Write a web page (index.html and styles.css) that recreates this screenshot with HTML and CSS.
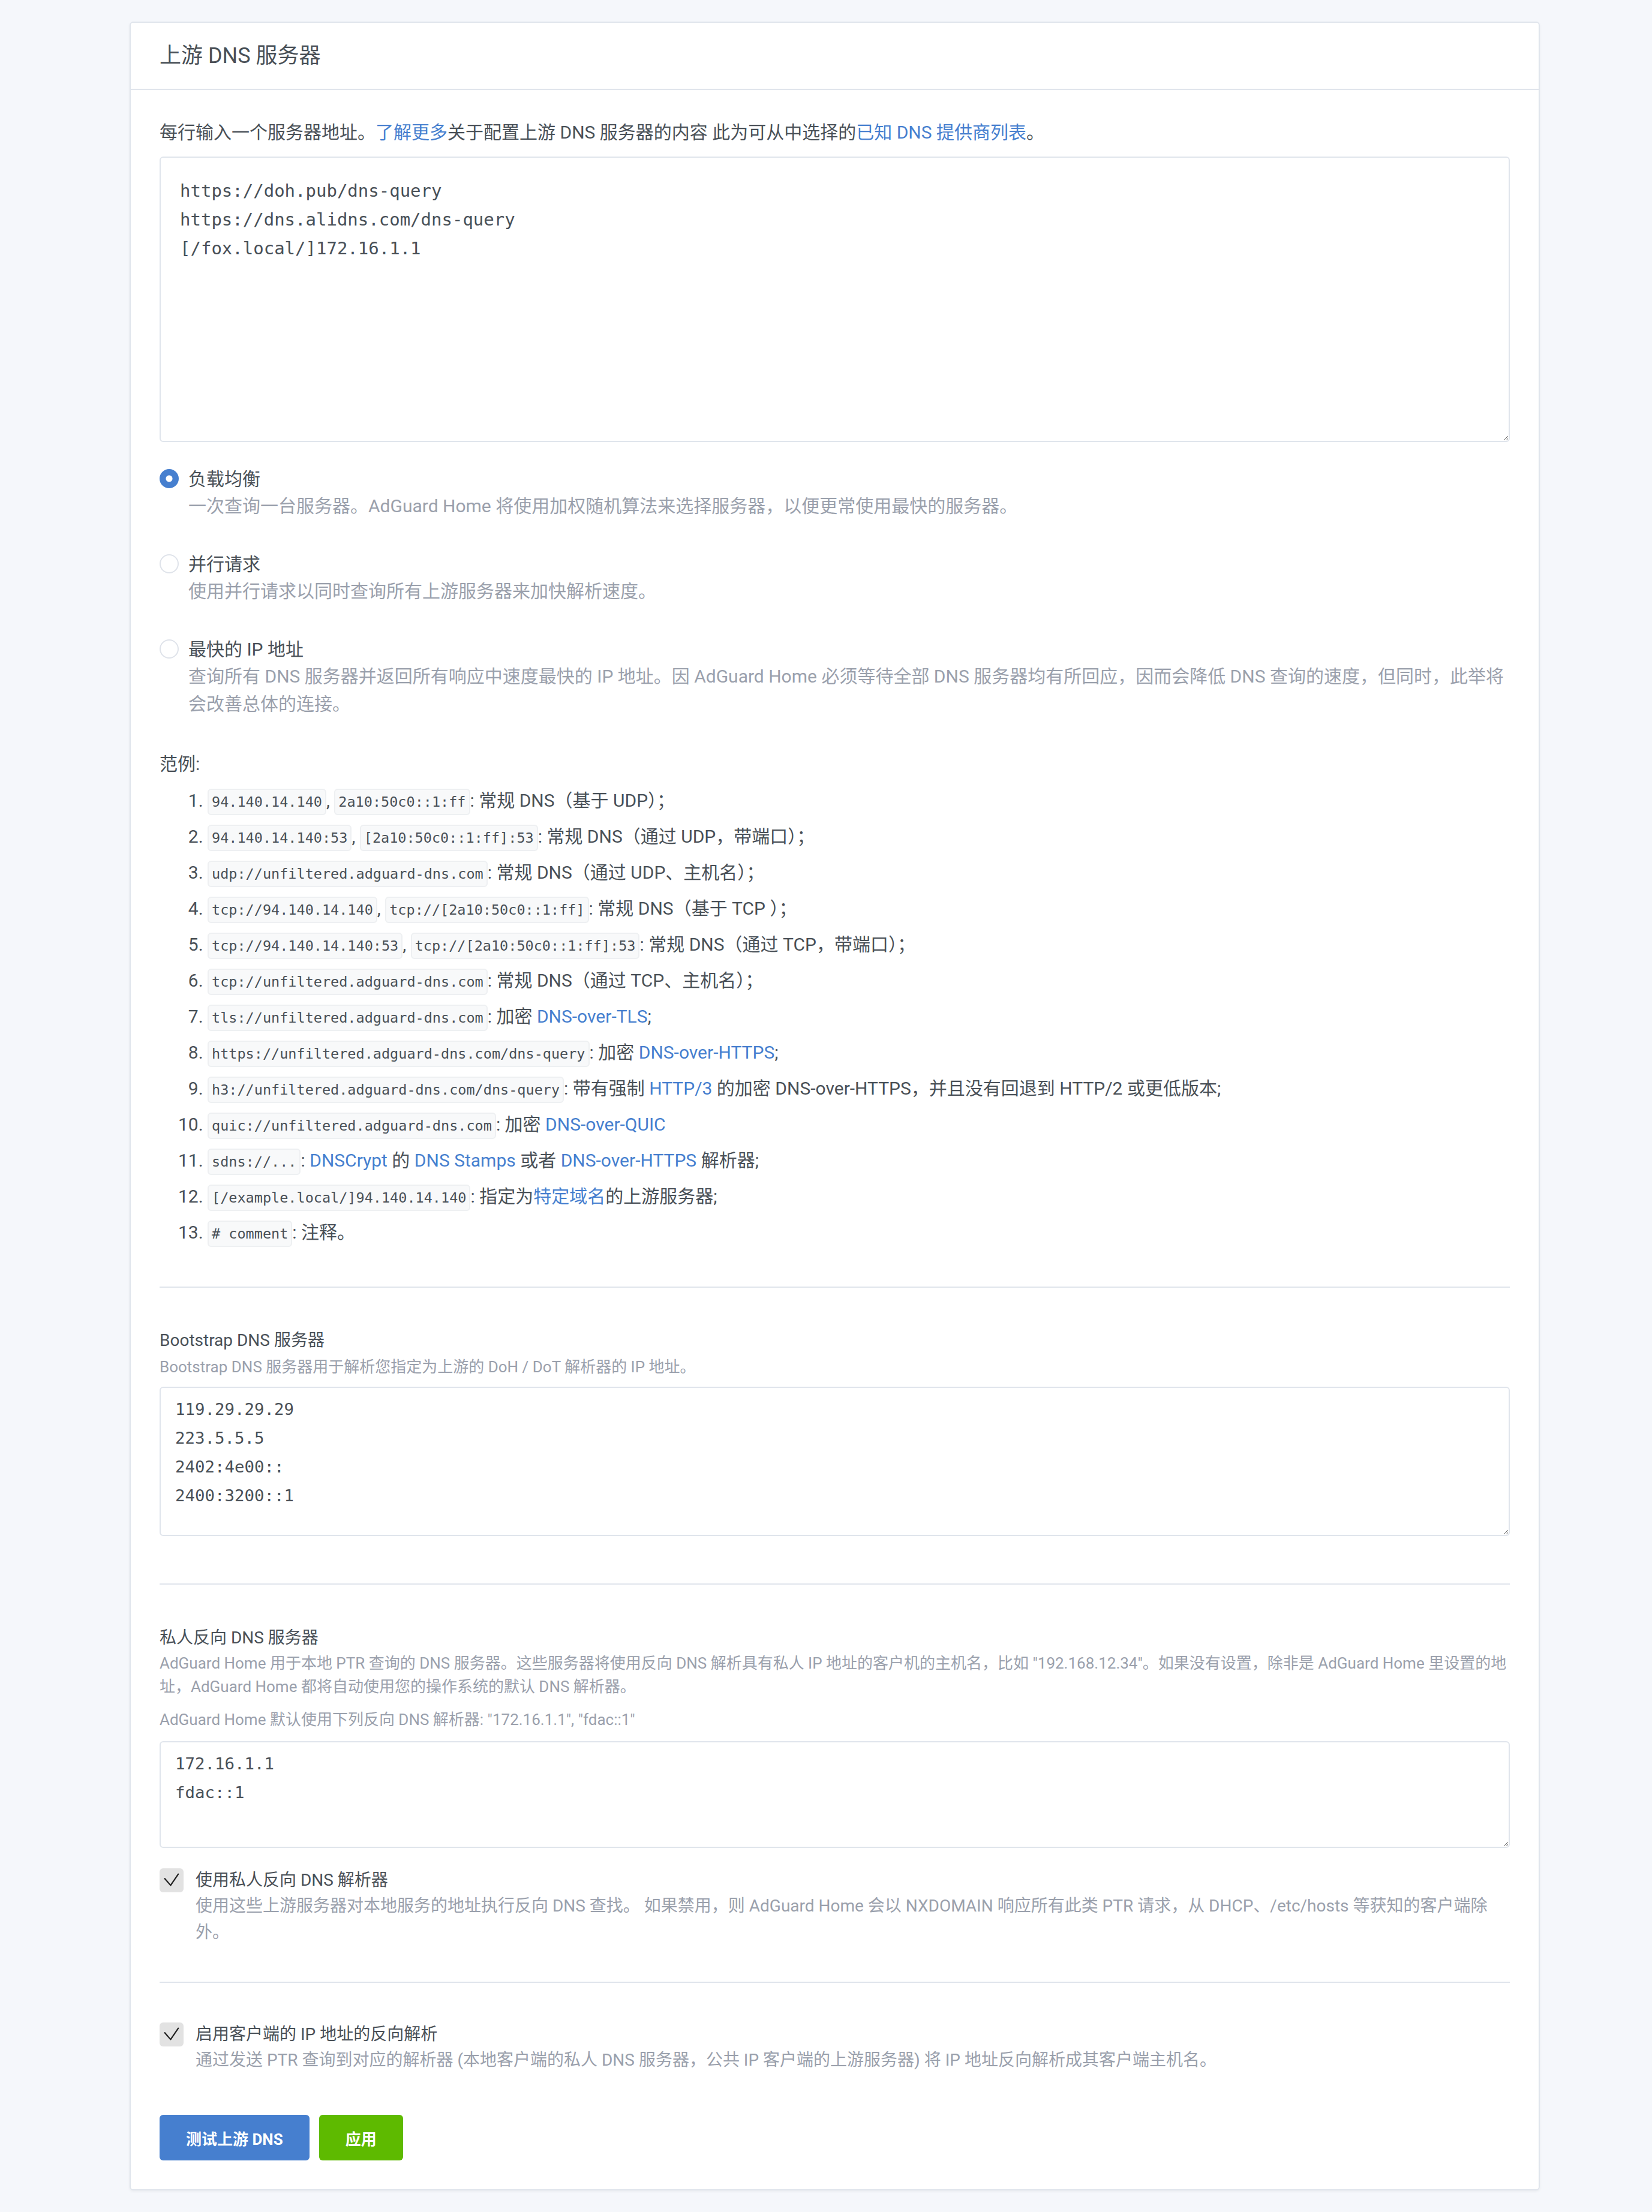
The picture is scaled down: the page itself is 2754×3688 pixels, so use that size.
FILE: index.html
```html
<!DOCTYPE html>
<html lang="zh-CN">
<head>
<meta charset="utf-8">
<title>上游 DNS 服务器</title>
<link rel="stylesheet" href="styles.css">
</head>
<body>
<div class="page">
  <div class="card">
    <div class="card-header">
      <h3 class="card-title">上游 DNS 服务器</h3>
    </div>
    <div class="card-body">
      <p class="intro">每行输入一个服务器地址。<a href="#">了解更多</a>关于配置上游 DNS 服务器的内容 此为可从中选择的<a href="#">已知 DNS 提供商列表</a>。</p>
      <textarea class="ta ta-upstream" spellcheck="false">https://doh.pub/dns-query
https://dns.alidns.com/dns-query
[/fox.local/]172.16.1.1</textarea>

      <div class="radios">
        <label class="radio">
          <input type="radio" name="mode" checked>
          <span class="radio-title">负载均衡</span>
          <span class="radio-desc">一次查询一台服务器。AdGuard Home 将使用加权随机算法来选择服务器，以便更常使用最快的服务器。</span>
        </label>
        <label class="radio">
          <input type="radio" name="mode">
          <span class="radio-title">并行请求</span>
          <span class="radio-desc">使用并行请求以同时查询所有上游服务器来加快解析速度。</span>
        </label>
        <label class="radio">
          <input type="radio" name="mode">
          <span class="radio-title">最快的 IP 地址</span>
          <span class="radio-desc">查询所有 DNS 服务器并返回所有响应中速度最快的 IP 地址。因 AdGuard Home 必须等待全部 DNS 服务器均有所回应，因而会降低 DNS 查询的速度，但同时，此举将会改善总体的连接。</span>
        </label>
      </div>

      <div class="examples">
        <div class="examples-title">范例:</div>
        <ol class="examples-list">
          <li><code>94.140.14.140</code>, <code>2a10:50c0::1:ff</code>: 常规 DNS（基于 UDP）；</li>
          <li><code>94.140.14.140:53</code>, <code>[2a10:50c0::1:ff]:53</code>: 常规 DNS（通过 UDP，带端口）；</li>
          <li><code>udp://unfiltered.adguard-dns.com</code>: 常规 DNS（通过 UDP、主机名）；</li>
          <li><code>tcp://94.140.14.140</code>, <code>tcp://[2a10:50c0::1:ff]</code>: 常规 DNS（基于 TCP ）；</li>
          <li><code>tcp://94.140.14.140:53</code>, <code>tcp://[2a10:50c0::1:ff]:53</code>: 常规 DNS（通过 TCP，带端口）；</li>
          <li><code>tcp://unfiltered.adguard-dns.com</code>: 常规 DNS（通过 TCP、主机名）；</li>
          <li><code>tls://unfiltered.adguard-dns.com</code>: 加密 <a href="#">DNS-over-TLS</a>;</li>
          <li><code>https://unfiltered.adguard-dns.com/dns-query</code>: 加密 <a href="#">DNS-over-HTTPS</a>;</li>
          <li><code>h3://unfiltered.adguard-dns.com/dns-query</code>: 带有强制 <a href="#">HTTP/3</a> 的加密 DNS-over-HTTPS，并且没有回退到 HTTP/2 或更低版本;</li>
          <li><code>quic://unfiltered.adguard-dns.com</code>: 加密 <a href="#">DNS-over-QUIC</a></li>
          <li><code>sdns://...</code>: <a href="#">DNSCrypt</a> 的 <a href="#">DNS Stamps</a> 或者 <a href="#">DNS-over-HTTPS</a> 解析器;</li>
          <li><code>[/example.local/]94.140.14.140</code>: 指定为<a href="#">特定域名</a>的上游服务器;</li>
          <li><code># comment</code>: 注释。</li>
        </ol>
      </div>

      <hr class="divider divider-1">

      <div class="field">
        <div class="field-label">Bootstrap DNS 服务器</div>
        <div class="field-desc">Bootstrap DNS 服务器用于解析您指定为上游的 DoH / DoT 解析器的 IP 地址。</div>
        <textarea class="ta ta-small ta-bootstrap" spellcheck="false">119.29.29.29
223.5.5.5
2402:4e00::
2400:3200::1</textarea>
      </div>

      <hr class="divider divider-2">

      <div class="field">
        <div class="field-label">私人反向 DNS 服务器</div>
        <div class="field-desc field-desc-tight">AdGuard Home 用于本地 PTR 查询的 DNS 服务器。这些服务器将使用反向 DNS 解析具有私人 IP 地址的客户机的主机名，比如 "192.168.12.34"。如果没有设置，除非是 AdGuard Home 里设置的地址，AdGuard Home 都将自动使用您的操作系统的默认 DNS 解析器。</div>
        <div class="field-desc field-desc-default">AdGuard Home 默认使用下列反向 DNS 解析器: "172.16.1.1", "fdac::1"</div>
        <textarea class="ta ta-small ta-private" spellcheck="false">172.16.1.1
fdac::1</textarea>
      </div>

      <div class="check check-first">
        <span class="check-box"><svg viewBox="0 0 20 20" width="40" height="40"><polyline points="4.4,8.6 9.2,14.2 15.6,4.8" fill="none" stroke="#1f1f1f" stroke-width="1.1" stroke-linecap="round" stroke-linejoin="round"/></svg></span>
        <span class="check-title">使用私人反向 DNS 解析器</span>
        <span class="check-desc">使用这些上游服务器对本地服务的地址执行反向 DNS 查找。 如果禁用，则 AdGuard Home 会以 NXDOMAIN 响应所有此类 PTR 请求，从 DHCP、/etc/hosts 等获知的客户端除外。</span>
      </div>

      <hr class="divider divider-3">

      <div class="check">
        <span class="check-box"><svg viewBox="0 0 20 20" width="40" height="40"><polyline points="4.4,8.6 9.2,14.2 15.6,4.8" fill="none" stroke="#1f1f1f" stroke-width="1.1" stroke-linecap="round" stroke-linejoin="round"/></svg></span>
        <span class="check-title">启用客户端的 IP 地址的反向解析</span>
        <span class="check-desc">通过发送 PTR 查询到对应的解析器 (本地客户端的私人 DNS 服务器，公共 IP 客户端的上游服务器) 将 IP 地址反向解析成其客户端主机名。</span>
      </div>

      <div class="actions">
        <button type="button" class="btn btn-primary">测试上游 DNS</button>
        <button type="button" class="btn btn-success">应用</button>
      </div>
    </div>
  </div>
</div>
</body>
</html>
```

FILE: styles.css
```css
html, body {
  margin: 0;
  padding: 0;
}

body {
  background: #f5f7fb;
  color: #495057;
  font-family: Roboto, "Noto Sans CJK SC", sans-serif;
  font-size: 30px;
  line-height: 45px;
}

a {
  color: #467fcf;
  text-decoration: none;
}

.page {
  padding: 36px 0 36px 216px;
}

.card {
  width: 2351px;
  box-sizing: border-box;
  background: #fff;
  border: 2px solid #e0e5ec;
  border-radius: 6px;
  box-shadow: 0 2px 4px rgba(0, 0, 0, 0.05);
}

.card-header {
  height: 112px;
  box-sizing: border-box;
  padding: 0 48px;
  border-bottom: 2px solid #e0e5ec;
  display: flex;
  align-items: center;
}

.card-title {
  margin: 0;
  font-size: 36px;
  font-weight: 400;
  line-height: 43px;
}

.card-body {
  padding: 48px;
}

.intro {
  margin: 0 0 18px;
}

/* textareas */
.ta {
  display: block;
  width: 100%;
  box-sizing: border-box;
  margin: 0;
  border: 2px solid #e0e5ec;
  border-radius: 6px;
  background: #fff;
  color: #495057;
  font-family: "DejaVu Sans Mono", monospace;
  line-height: 48px;
  resize: vertical;
  overflow: hidden;
  outline: none;
}

.ta-upstream {
  height: 476px;
  padding: 31px 32px;
  font-size: 29px;
}

.ta-small {
  padding: 12px 24px;
  font-size: 27.4px;
}

.ta-bootstrap {
  height: 249px;
  margin-top: 13px;
}

.ta-private {
  height: 178px;
  margin-top: 16px;
}

/* radios */
.radios {
  display: flex;
  flex-direction: column;
  gap: 51px;
  margin: 39px 0 0;
}

.radio {
  display: grid;
  grid-template-columns: 32px 1fr;
  column-gap: 16px;
  cursor: pointer;
}

.radio input {
  -webkit-appearance: none;
  appearance: none;
  grid-column: 1;
  grid-row: 1;
  width: 32px;
  height: 32px;
  margin: 6px 0 0;
  box-sizing: border-box;
  border: 2px solid #dfe3ea;
  border-radius: 50%;
  background: #fff;
}

.radio input:checked {
  border-color: #467fcf;
  background: radial-gradient(circle, #fff 0 5px, #467fcf 6px);
}

.radio-title {
  grid-column: 2;
  grid-row: 1;
  line-height: 45px;
}

.radio-desc {
  grid-column: 2;
  grid-row: 2;
  color: #9aa0ac;
  line-height: 46px;
}

/* examples */
.examples {
  margin-top: 54px;
  font-size: 30px;
}

.examples-title {
  line-height: 45px;
}

.examples-list {
  margin: 9px 0 0;
  padding-left: 80px;
  line-height: 60px;
}

.examples-list code {
  font-family: "DejaVu Sans Mono", monospace;
  font-size: 23.5px;
  line-height: 1;
  color: #495057;
  background: #f8f9fa;
  border: 2px solid #eef0f2;
  border-radius: 6px;
  padding: 6px 5px;
}

/* dividers */
.divider {
  height: 0;
  border: 0;
  border-top: 2px solid #e0e5ec;
}

.divider-1 {
  margin: 60px 0 67px;
}

.divider-2 {
  margin: 79px 0 68px;
}

.divider-3 {
  margin: 60px 0 65px;
}

/* fields */
.field-label {
  font-size: 28px;
  line-height: 42px;
}

.field-desc {
  margin-top: 4px;
  font-size: 26px;
  line-height: 39px;
  color: #9aa0ac;
}

.field-desc-tight {
  margin-top: 2px;
}

.field-desc-default {
  margin-top: 16px;
}

/* checkboxes */
.check {
  display: grid;
  grid-template-columns: 40px 1fr;
  column-gap: 20px;
  font-size: 28px;
}

.check-first {
  margin-top: 33px;
}

.check-box {
  grid-column: 1;
  grid-row: 1;
  width: 40px;
  height: 40px;
  margin-top: 1px;
  border-radius: 6px;
  background: #e2e2e2;
  display: flex;
}

.check-box svg {
  display: block;
}

.check-title {
  grid-column: 2;
  grid-row: 1;
  line-height: 42px;
}

.check-desc {
  grid-column: 2;
  grid-row: 2;
  color: #9aa0ac;
  line-height: 44px;
}

/* buttons */
.actions {
  display: flex;
  gap: 16px;
  margin-top: 69px;
}

.btn {
  height: 76px;
  padding: 0 44px;
  border: 0;
  border-radius: 6px;
  color: #fff;
  font-family: Roboto, "Noto Sans CJK SC", sans-serif;
  font-size: 26px;
  font-weight: 700;
  cursor: pointer;
}

.btn-primary {
  background: #467fcf;
}

.btn-success {
  background: #5eba00;
}
```
